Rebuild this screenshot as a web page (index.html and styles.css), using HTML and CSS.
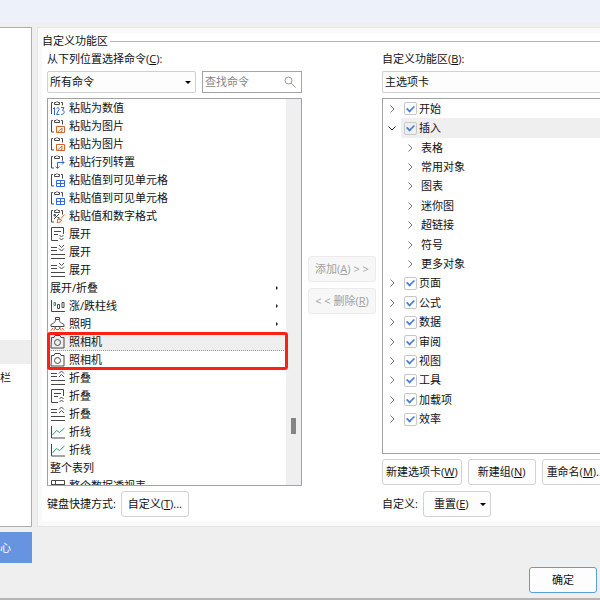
FILE: index.html
```html
<!DOCTYPE html>
<html lang="zh-CN">
<head>
<meta charset="utf-8">
<title>选项</title>
<link rel="stylesheet" href="styles.css">
</head>
<body>
<svg class="defs" aria-hidden="true">
  <symbol id="clip" viewBox="0 0 16 16"><path d="M3 2.500H1.500v11.500h2.500M11 2.500h1.500v4M4.500 4.500v-2H6q1-2 2 0h1.500v2z"/></symbol>
  <symbol id="paste-num" viewBox="0 0 16 16"><path d="M3 2.500H1.500v11.500M11 2.500h1.500v3M4.500 4.500v-2H6q1-2 2 0h1.500v2z"/><path class="blue" d="M3 9l1.500-1.500V15M6.500 8.500c.5-1.500 3-1 2.500.8L6.500 14.500H9.500M11 7.500h3L12.500 10.500c2.500 0 2.500 4-1.500 4"/></symbol>
  <symbol id="paste-pic" viewBox="0 0 16 16"><use href="#clip"/><path class="orange" d="M6.500 8.500h8v6h-8zM7 14.500l5-4.500v3l-2 1.500"/></symbol>
  <symbol id="paste-turn" viewBox="0 0 16 16"><use href="#clip"/><path class="blue" d="M7.500 14V8.500H14M5.500 12.500l2 2 2-2M12 6.500l2 2-2 2"/></symbol>
  <symbol id="paste-grid" viewBox="0 0 16 16"><use href="#clip"/><path class="blue" d="M6.500 8.500h8v6h-8zM6.500 11.500h8M10.500 8.500v6"/></symbol>
  <symbol id="paste-fmt" viewBox="0 0 16 16"><use href="#clip"/><path d="M4 11l5-5M4 6.500h1.500v1.500H4zM7.500 9.500h1.500V11"/><path class="orange" d="M14.500 6.500L11 10.500M8 11l3.500 1c0 2-2.500 2.500-4.500 2.500 1-1 0-2 1-3.500z"/></symbol>
  <symbol id="expand-box" viewBox="0 0 16 16"><path d="M8 14.500H1.500v-13h12V8M4 5.500h7M4 8.500h4"/><path d="M9.500 9l2 2 2-2M9.500 12l2 2 2-2"/></symbol>
  <symbol id="expand-lines" viewBox="0 0 16 16"><path d="M1 3.500h6M1 6.500h6M1 10.500h14M1 14.500h14M9 1l2.500 2.500L14 1M9 4.500L11.500 7 14 4.500"/></symbol>
  <symbol id="fold-box" viewBox="0 0 16 16"><path d="M8 14.500H1.500v-13h12V8M4 5.500h7M4 8.500h4"/><path d="M9.500 11l2-2 2 2M9.500 14l2-2 2 2"/></symbol>
  <symbol id="fold-lines" viewBox="0 0 16 16"><path d="M1 3.500h6M1 6.500h6M1 10.500h14M1 14.500h14M9 3.500L11.500 1 14 3.500M9 7l2.500-2.500L14 7"/></symbol>
  <symbol id="bars" viewBox="0 0 16 16"><path d="M1.500 2v11.500H15M7.500 6.500h2v4h-2zM12 4.500h2v5h-2z"/><path class="green" d="M4 4.500h1.500v3H4z"/></symbol>
  <symbol id="lamp" viewBox="0 0 16 16"><path d="M5.500 3.500v-2h4v2M5.500 3.500h4c0 3 1 3 4.500 5v2H1v-2c3.500-2 4.500-2 4.500-5zM5 11c0 3.500 5 3.500 5 0"/><path class="orange" d="M3 12l-2 2.500M12 12l2 2.500M4.500 12.500l-.5 2M10.500 12.500l.5 2"/></symbol>
  <symbol id="camera" viewBox="0 0 16 16"><path d="M1.500 3.500H4l1-2h5l1 2h3v10.500h-13z"/><circle cx="7.500" cy="8.500" r="3"/></symbol>
  <symbol id="line" viewBox="0 0 16 16"><path d="M1.500 2v12H15"/><path class="green" d="M2.500 11L6.500 6.500l3 2L14.500 4"/></symbol>
  <symbol id="table" viewBox="0 0 16 16"><path d="M1.500 2.500h13v12h-13zM1.500 6.500h13M5.500 2.500v12"/><path class="blue" d="M12.500 7v4"/></symbol>
  <symbol id="chev" viewBox="0 0 8 8"><path d="M2.500 .5L6 4 2.500 7.500"/></symbol>
  <symbol id="chev-down" viewBox="0 0 8 8"><path d="M.5 2.500L4 6l3.500-3.500"/></symbol>
</svg>

<header class="titlebar"></header>
<main class="dialog">
  <nav class="sidebar">
    <a class="nav-item current" href="#ribbon" aria-current="page"></a>
    <a class="nav-item" href="#toolbar">栏</a>
  </nav>
  <section class="panel">
    <div class="page">
      <h1 class="heading">自定义功能区</h1>
      <div class="columns">
        <div class="source">
          <label class="caption" for="source">从下列位置选择命令(<u>C</u>):</label>
          <div class="pickers">
            <div class="picker"><select id="source"><option>所有命令</option></select></div>
            <div class="search">
              <input type="text" placeholder="查找命令" aria-label="查找命令">
              <svg viewBox="0 0 12 12"><circle cx="4.500" cy="4.500" r="3.500"/><path d="M7 7l4.500 4.500"/></svg>
            </div>
          </div>
          <div class="listbox">
            <ul class="commands">
              <li><svg><use href="#paste-num"/></svg>粘贴为数值</li>
              <li><svg><use href="#paste-pic"/></svg>粘贴为图片</li>
              <li><svg><use href="#paste-pic"/></svg>粘贴为图片</li>
              <li><svg><use href="#paste-turn"/></svg>粘贴行列转置</li>
              <li><svg><use href="#paste-grid"/></svg>粘贴值到可见单元格</li>
              <li><svg><use href="#paste-grid"/></svg>粘贴值到可见单元格</li>
              <li><svg><use href="#paste-fmt"/></svg>粘贴值和数字格式</li>
              <li><svg><use href="#expand-box"/></svg>展开</li>
              <li><svg><use href="#expand-lines"/></svg>展开</li>
              <li><svg><use href="#expand-lines"/></svg>展开</li>
              <li class="more">展开/折叠</li>
              <li class="more"><svg><use href="#bars"/></svg>涨/跌柱线</li>
              <li class="more"><svg><use href="#lamp"/></svg>照明</li>
              <li class="selected"><svg><use href="#camera"/></svg>照相机</li>
              <li><svg><use href="#camera"/></svg>照相机</li>
              <li><svg><use href="#fold-lines"/></svg>折叠</li>
              <li><svg><use href="#fold-box"/></svg>折叠</li>
              <li><svg><use href="#fold-lines"/></svg>折叠</li>
              <li><svg><use href="#line"/></svg>折线</li>
              <li><svg><use href="#line"/></svg>折线</li>
              <li>整个表列</li>
              <li><svg><use href="#table"/></svg>整个数据透视表</li>
            </ul>
            <div class="scrollbar"><div class="thumb"></div></div>
            <div class="marker"></div>
          </div>
          <div class="row">
            <span>键盘快捷方式:</span>
            <button class="btn" type="button">自定义(<u>T</u>)...</button>
          </div>
        </div>

        <div class="transfer">
          <button class="btn" type="button" disabled>添加(<u>A</u>) &gt; &gt;</button>
          <button class="btn" type="button" disabled>&lt; &lt; 删除(<u>R</u>)</button>
        </div>

        <div class="target">
          <label class="caption" for="target">自定义功能区(<u>B</u>):</label>
          <div class="picker open-end"><select id="target"><option>主选项卡</option></select></div>
          <div class="treebox">
            <ul class="tree">
              <li><svg><use href="#chev"/></svg><label><input type="checkbox" checked>开始</label></li>
              <li class="active"><svg><use href="#chev-down"/></svg><label><input type="checkbox" checked>插入</label></li>
              <li class="sub"><svg><use href="#chev"/></svg>表格</li>
              <li class="sub"><svg><use href="#chev"/></svg>常用对象</li>
              <li class="sub"><svg><use href="#chev"/></svg>图表</li>
              <li class="sub"><svg><use href="#chev"/></svg>迷你图</li>
              <li class="sub"><svg><use href="#chev"/></svg>超链接</li>
              <li class="sub"><svg><use href="#chev"/></svg>符号</li>
              <li class="sub"><svg><use href="#chev"/></svg>更多对象</li>
              <li><svg><use href="#chev"/></svg><label><input type="checkbox" checked>页面</label></li>
              <li><svg><use href="#chev"/></svg><label><input type="checkbox" checked>公式</label></li>
              <li><svg><use href="#chev"/></svg><label><input type="checkbox" checked>数据</label></li>
              <li><svg><use href="#chev"/></svg><label><input type="checkbox" checked>审阅</label></li>
              <li><svg><use href="#chev"/></svg><label><input type="checkbox" checked>视图</label></li>
              <li><svg><use href="#chev"/></svg><label><input type="checkbox" checked>工具</label></li>
              <li><svg><use href="#chev"/></svg><label><input type="checkbox" checked>加载项</label></li>
              <li><svg><use href="#chev"/></svg><label><input type="checkbox" checked>效率</label></li>
            </ul>
          </div>
          <div class="row actions">
            <button class="btn wide" type="button">新建选项卡(<u>W</u>)</button>
            <button class="btn" type="button">新建组(<u>N</u>)</button>
            <button class="btn wide" type="button">重命名(<u>M</u>)...</button>
          </div>
          <div class="row">
            <span>自定义:</span>
            <button class="btn menu" type="button"><span>重置(<u>E</u>)</span></button>
          </div>
        </div>
      </div>
    </div>
  </section>
</main>
<footer class="footer">
  <button class="center" type="button">心</button>
  <button class="btn ok" type="button">确定</button>
</footer>
</body>
</html>
```
FILE: styles.css
```css
* { box-sizing: border-box; }

body {
  margin: 0;
  min-height: 100vh;
  display: flex;
  flex-direction: column;
  overflow: hidden;
  background: #efefef;
  color: #111;
  font: 11px/16px "Open Sans", "Noto Sans CJK SC", sans-serif;
}

button, input, select { font: inherit; color: inherit; margin: 0; }
ul { margin: 0; padding: 0; list-style: none; }
u { text-underline-offset: 1px; }

svg { flex: none; fill: none; stroke: #484848; stroke-width: 1; }
.defs { position: absolute; width: 0; height: 0; }
.blue { stroke: #3568e0; }
.orange { stroke: #d9622b; }
.green { stroke: #2f9a70; }

.titlebar { height: 23px; background: #edf1f9; }

.dialog { display: flex; gap: 5px; padding-top: 4px; }

.sidebar {
  flex: none;
  width: 32px;
  padding-top: 312px;
  background: #fff;
  border: 1px solid #adadad;
  border-left: 0;
}
.nav-item { display: block; height: 24px; margin-bottom: 2px; line-height: 24px; color: inherit; text-decoration: none; }
.nav-item.current { background: #eee; }

.panel {
  flex: 1;
  min-width: 0;
  overflow: hidden;
  padding: 5px 0 5px 4px;
  background: #f9f9f9;
  border: 1px solid #e5e5e5;
  border-right: 0;
}
.page { background: #fff; padding-bottom: 4px; }

.heading {
  display: flex;
  align-items: center;
  gap: 2px;
  margin: 0;
  font: inherit;
}
.heading::after { content: ""; flex: 1; height: 1px; background: #b4b4b4; }

.columns {
  display: grid;
  grid-template-columns: 255px 68px minmax(0, 1fr);
  gap: 6px;
  padding: 2px 0 0 5px;
}
.source, .target { display: flex; flex-direction: column; }
.caption { height: 20px; }

.pickers { display: grid; grid-template-columns: 149px minmax(0, 1fr); gap: 6px; }
.picker { position: relative; height: 22px; }
.picker select {
  appearance: none;
  width: 100%;
  height: 22px;
  padding: 0 2px;
  background: #fdfdfd;
  border: 1px solid #d0d0d0;
  border-radius: 2px;
}
.picker::after, .menu::after {
  content: "";
  border: 3px solid transparent;
  border-top-color: #000;
  border-bottom: 0;
}
.picker::after { position: absolute; right: 5px; top: 10px; }
.open-end::after { display: none; }
.open-end select { border-right: 0; border-radius: 2px 0 0 2px; }

.search {
  display: flex;
  align-items: center;
  height: 22px;
  padding: 0 5px 0 2px;
  background: #fff;
  border: 1px solid #a2a5ae;
}
.search input { flex: 1; min-width: 0; padding: 0; border: 0; outline: 0; background: none; }
.search input::placeholder { color: #858585; }
.search svg { width: 12px; height: 12px; stroke: #999; }

.listbox {
  position: relative;
  display: grid;
  grid-template-columns: 1fr 15px;
  height: 388px;
  margin: 5px 0;
  border: 1px solid #9fa2a9;
}
.commands { overflow: hidden; }
.commands li { display: flex; align-items: center; gap: 3px; height: 18px; padding: 0 3px 0 2px; }
.commands svg { width: 16px; height: 16px; }
.commands .selected { background: #efefef; border: 1px dotted #999; border-width: 0 1px 1px 0; }
.more::after {
  content: "";
  margin-left: auto;
  margin-right: 5px;
  border: 2px solid transparent;
  border-left-color: #222;
  border-right: 0;
}
.scrollbar { padding: 319px 5px 0; background: #efefef; }
.thumb { height: 16px; background: #858585; }
.marker {
  position: absolute;
  left: -1px;
  top: 233px;
  width: 241px;
  height: 38px;
  border: 3px solid #ff2015;
  border-radius: 3px;
}

.row { display: flex; align-items: center; gap: 5px; }
.btn {
  flex: none;
  min-width: 68px;
  height: 26px;
  padding: 0 4px;
  background: #fdfdfd;
  border: 1px solid #d2d2d2;
  border-radius: 3px;
  white-space: nowrap;
}
.btn:disabled { color: #a0a0a0; background: #f7f7f7; border-color: #ebebeb; }
.wide { padding: 0 3px; }
.menu { display: flex; align-items: center; justify-content: space-between; padding: 0 4px 0 10px; }

.transfer { display: flex; flex-direction: column; gap: 6px; padding-top: 205px; }

.treebox {
  height: 356px;
  margin: 5px 0;
  border: 1px solid #9fa2a9;
  border-right: 0;
}
.tree { display: grid; grid-auto-rows: 1fr; height: 330px; }
.tree li { display: flex; align-items: center; gap: 8px; padding-left: 5px; }
.tree svg { width: 8px; height: 8px; stroke: #777; }
.tree .sub { gap: 7px; padding-left: 23px; }
.tree label { display: flex; flex: 1; align-items: center; gap: 2px; height: 100%; }
.tree .active { gap: 5px; }
.tree .active svg { stroke: #222; }
.active label { padding-left: 3px; background: #efefef; }
.tree input {
  appearance: none;
  display: grid;
  place-items: center;
  width: 13px;
  height: 13px;
  border: 1px solid #c4c7cc;
  border-radius: 2px;
}
.tree input:checked::after {
  content: "";
  width: 7px;
  height: 4px;
  margin-bottom: 2px;
  border: solid #4a7fd6;
  border-width: 0 0 2px 2px;
  transform: rotate(-45deg) scale(0.85);
}
.actions { gap: 6px; overflow: hidden; margin-bottom: 6px; }

.footer {
  flex: 1;
  display: flex;
  justify-content: space-between;
  align-items: flex-start;
  padding: 5px 3px 0 0;
  border-bottom: 2px solid #b5b5b5;
}
.center {
  width: 32px;
  height: 31px;
  padding: 0;
  background: #6694e0;
  border: 0;
  color: #fff;
  text-align: left;
}
.ok { margin-top: 35px; border-color: #5a9fd8; }
```
